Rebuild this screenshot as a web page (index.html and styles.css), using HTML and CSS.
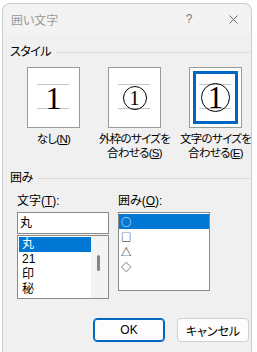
FILE: index.html
```html
<!DOCTYPE html>
<html lang="ja">
<head>
<meta charset="utf-8">
<link rel="stylesheet" href="styles.css">
</head>
<body>
<div class="dialog">
  <div class="titlebar">
    <span class="title">囲い文字</span>
    <span class="help">?</span>
    <svg class="close" width="9" height="9" viewBox="0 0 9 9"><path d="M0.5 0.5 L8.5 8.5 M8.5 0.5 L0.5 8.5" stroke="#6e6e6e" stroke-width="1" fill="none"/></svg>
  </div>
  <div class="content">
    <div class="group-head"><span>スタイル</span><i class="rule"></i></div>
    <div class="styles">
      <div class="style-opt">
        <div class="preview"><span class="digit">1</span></div>
        <div class="caption">なし(<u>N</u>)</div>
      </div>
      <div class="style-opt">
        <div class="preview"><span class="ring small"><span class="digit">1</span></span></div>
        <div class="caption">外枠のサイズを<br>合わせる(<u>S</u>)</div>
      </div>
      <div class="style-opt">
        <div class="preview selected"><span class="ring large"><span class="digit">1</span></span></div>
        <div class="caption">文字のサイズを<br>合わせる(<u>E</u>)</div>
      </div>
    </div>
    <div class="group-head second"><span>囲み</span><i class="rule"></i></div>
    <div class="enclose">
      <div class="col">
        <div class="label">文字(<u>T</u>):</div>
        <div class="textbox">丸</div>
        <div class="listbox chars">
          <ul class="items">
            <li class="sel">丸</li>
            <li>21</li>
            <li>印</li>
            <li>秘</li>
          </ul>
          <div class="scroll"><i class="thumb"></i></div>
        </div>
      </div>
      <div class="col">
        <div class="label">囲み(<u>O</u>):</div>
        <div class="listbox shapes">
          <ul class="items">
            <li class="sel">○</li>
            <li>□</li>
            <li>△</li>
            <li>◇</li>
          </ul>
        </div>
      </div>
    </div>
    <div class="buttons">
      <button class="btn default">OK</button>
      <button class="btn">キャンセル</button>
    </div>
  </div>
</div>
</body>
</html>
```
FILE: styles.css
```css
* { box-sizing: border-box; }
body {
  margin: 0;
  background: #ffffff;
  font-family: "Liberation Sans", "Noto Sans CJK JP", sans-serif;
  font-size: 12px;
  font-feature-settings: "palt";
  color: #000;
}
.dialog {
  margin: 3px 0 0 2px;
  width: 250px;
  height: 349px;
  border: 1px solid #cbcbcb;
  border-bottom: none;
  border-radius: 8px 8px 0 0;
  background: #f0f0f0;
  overflow: hidden;
}
.titlebar {
  height: 30px;
  background: #f3f3f3;
  display: flex;
  align-items: center;
  padding-left: 8px;
  color: #9a9a9a;
}
.title { font-size: 12px; }
.help {
  margin-left: auto;
  width: 12px;
  text-align: center;
  color: #7a7a7a;
}
.close { margin: 0 13px 0 34px; display: block; }
.content { padding: 0 1px 0 7px; }
.group-head {
  display: flex;
  align-items: center;
  gap: 5px;
  height: 16px;
  line-height: 16px;
  margin-top: 10px;
}
.group-head span { letter-spacing: -0.5px; }
.group-head.second { margin-top: 10px; }
.rule { flex: 1; height: 1px; background: #dadada; }
.styles {
  display: grid;
  grid-template-columns: repeat(3, 81px);
  margin: 7px 0 0 3px;
}
.style-opt { display: flex; flex-direction: column; align-items: center; min-width: 0; }
.preview {
  width: 53px;
  height: 61px;
  border: 1px solid #9a9a9a;
  background-color: #fff;
  background-image: linear-gradient(#c4c4c4, #c4c4c4), linear-gradient(#c4c4c4, #c4c4c4);
  background-repeat: no-repeat;
  background-size: 32px 1px, 32px 1px;
  background-position: 9px 16px, 9px 40px;
  display: flex;
  align-items: center;
  justify-content: center;
}
.preview.selected {
  box-shadow: inset 0 0 0 3px #fff, inset 0 0 0 6px #0067c0;
}
.digit {
  font-family: "Liberation Serif", serif;
  font-size: 32px;
  line-height: 1;
  margin-top: 1px;
}
.ring {
  display: flex;
  align-items: center;
  justify-content: center;
  border: 1px solid #000;
  border-radius: 50%;
}
.ring.small { width: 24px; height: 24px; }
.ring.small .digit { font-size: 20px; margin-top: 0; }
.ring.large { width: 29px; height: 29px; }
.ring.large .digit { font-size: 31px; margin-top: 0; }
.caption {
  margin-top: 5px;
  line-height: 13.5px;
  font-size: 11.5px;
  letter-spacing: -0.7px;
  text-align: center;
  white-space: nowrap;
}
u { text-underline-offset: 1px; }
.enclose {
  display: flex;
  gap: 9px;
  padding-left: 7px;
  margin-top: 7px;
}
.col { width: 92px; }
.label { line-height: 16px; margin-bottom: 3px; }
.textbox {
  height: 22px;
  border: 1px solid #8a8a8a;
  background: #fff;
  padding-left: 2px;
  line-height: 20px;
}
.listbox {
  border: 1px solid #8a8a8a;
  background: #fff;
  display: flex;
}
.listbox.chars { margin-top: 1px; height: 64px; }
.listbox.shapes { height: 79px; }
.items {
  list-style: none;
  margin: 0;
  padding: 1px 0 0 0;
  flex: 1;
}
.chars .items { padding-left: 1px; }
.items li {
  height: 15px;
  line-height: 15px;
  padding-left: 3px;
}
.shapes .items li {
  padding-left: 2px;
  font-family: "Noto Sans CJK JP", sans-serif;
  font-size: 10.3px;
}
.items li.sel { background: #0078d4; color: #fff; }
.scroll {
  width: 17px;
  background: #f3f3f3;
  padding: 19px 0 0 6px;
}
.thumb {
  display: block;
  width: 3px;
  height: 16px;
  background: #858585;
  border-radius: 2px;
}
.buttons {
  display: flex;
  justify-content: flex-end;
  gap: 12px;
  margin-top: 19px;
  padding-right: 1px;
}
.btn {
  width: 72px;
  height: 24px;
  border: 1px solid #d0d0d0;
  border-radius: 4px;
  background: #fdfdfd;
  font-family: inherit;
  font-size: 12px;
  font-feature-settings: "palt";
  color: #000;
  padding: 0;
}
.btn.default {
  border-color: #0067c0;
  box-shadow: inset 0 0 0 1px #0067c0;
}
```
